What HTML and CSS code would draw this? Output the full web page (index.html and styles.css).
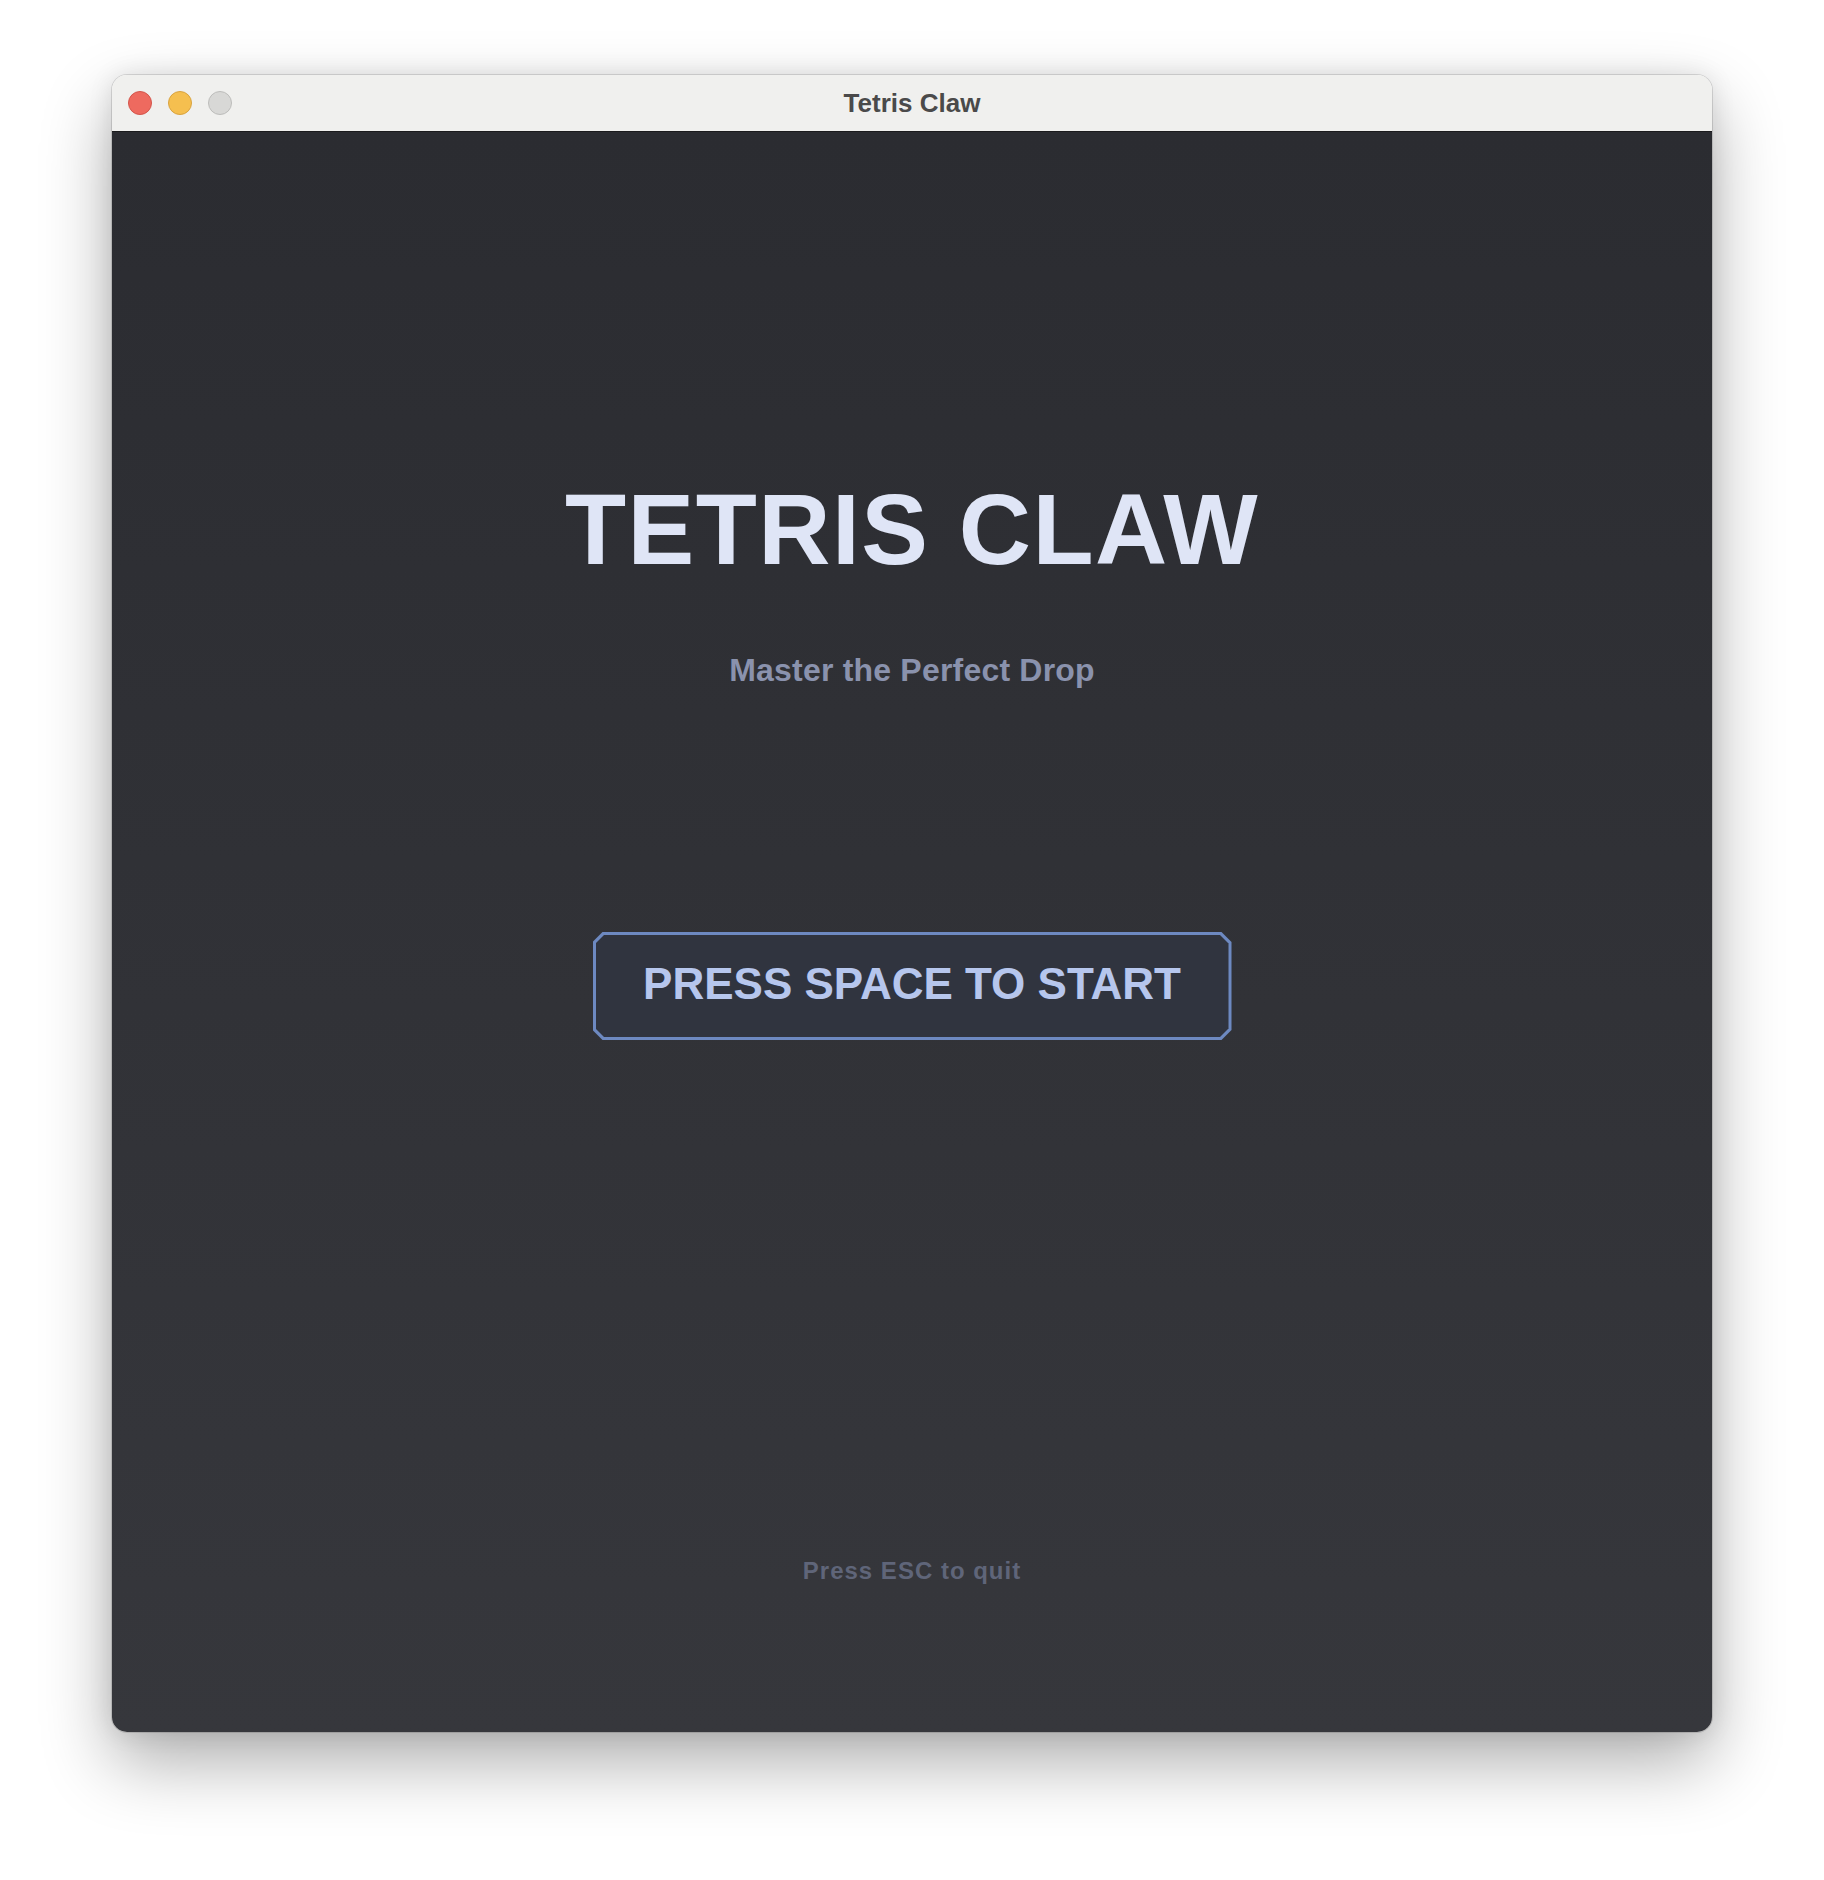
FILE: index.html
```html
<!DOCTYPE html>
<html lang="en">
<head>
<meta charset="utf-8">
<title>Tetris Claw</title>
<link rel="stylesheet" href="styles.css">
</head>
<body>
<div class="window">
  <div class="titlebar">
    <div class="lights">
      <span class="light red"></span>
      <span class="light yellow"></span>
      <span class="light gray"></span>
    </div>
    <div class="wtitle">Tetris Claw</div>
  </div>
  <div class="content">
    <h1 class="title">TETRIS CLAW</h1>
    <p class="subtitle">Master the Perfect Drop</p>
    <div class="btn"><div class="btn-inner">PRESS SPACE TO START</div></div>
    <p class="quit">Press ESC to quit</p>
  </div>
</div>
</body>
</html>
```
FILE: styles.css
```css
html, body {
  margin: 0;
  padding: 0;
  background: #ffffff;
}
body {
  width: 1824px;
  height: 1880px;
  font-family: "Liberation Sans", Arial, sans-serif;
  overflow: hidden;
}
.window {
  margin: 75px 0 0 112px;
  width: 1600px;
  border-radius: 15px;
  overflow: hidden;
  box-shadow: 0 30px 70px rgba(0,0,0,0.32), 0 0 24px rgba(0,0,0,0.10), 0 0 0 1px rgba(0,0,0,0.12);
}
.titlebar {
  position: relative;
  height: 56px;
  background: #f0f0ee;
  border-bottom: 1px solid #1b1b1d;
  display: flex;
  align-items: center;
  justify-content: center;
}
.lights {
  position: absolute;
  left: 16px;
  top: 16px;
  display: flex;
  gap: 16px;
}
.light {
  width: 22px;
  height: 22px;
  border-radius: 50%;
  border: 1px solid;
}
.red { background: #ee6a5f; border-color: #d4554b; }
.yellow { background: #f5bf4f; border-color: #d9a33f; }
.gray { background: #d8d8d6; border-color: #bdbdbb; }
.wtitle {
  font-size: 26px;
  font-weight: bold;
  color: #4a4a4a;
  margin-top: 0;
}
.content {
  height: 1600px;
  background: linear-gradient(#2b2c31, #36373c);
  display: flex;
  flex-direction: column;
  align-items: center;
}
.title {
  margin: 347px 0 0;
  font-size: 100px;
  line-height: 1;
  font-weight: bold;
  letter-spacing: 1.5px;
  color: #dfe5f6;
}
.subtitle {
  margin: 75px 0 0;
  font-size: 32px;
  line-height: 1;
  font-weight: bold;
  letter-spacing: 0.2px;
  color: #8a92ad;
}
.btn {
  margin-top: 246px;
  width: 639px;
  padding: 3px;
  box-sizing: border-box;
  background: #6d89c1;
  clip-path: polygon(10px 0, calc(100% - 10px) 0, 100% 10px, 100% calc(100% - 10px), calc(100% - 10px) 100%, 10px 100%, 0 calc(100% - 10px), 0 10px);
}
.btn-inner {
  background: #30343f;
  padding: 27px 0 31px;
  text-align: center;
  font-size: 44px;
  line-height: 1;
  font-weight: bold;
  color: #b6c6ed;
  clip-path: polygon(8.5px 0, calc(100% - 8.5px) 0, 100% 8.5px, 100% calc(100% - 8.5px), calc(100% - 8.5px) 100%, 8.5px 100%, 0 calc(100% - 8.5px), 0 8.5px);
}
.quit {
  margin: 519px 0 0;
  font-size: 24px;
  line-height: 1;
  font-weight: bold;
  letter-spacing: 1px;
  color: #5f6579;
}
```
